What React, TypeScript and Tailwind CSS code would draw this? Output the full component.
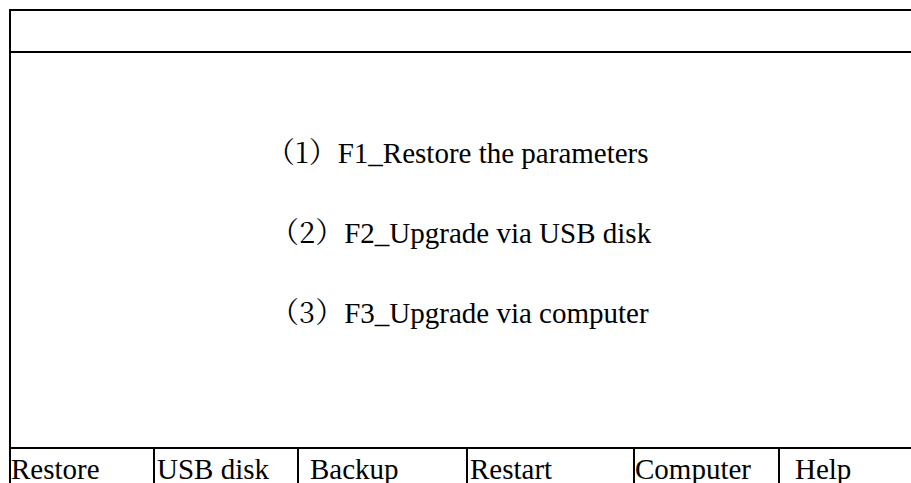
import React from "react";

const OPTIONS = [
  { num: "1", text: "F1_Restore the parameters", pad: "pl-[255px]" },
  { num: "2", text: "F2_Upgrade via USB disk", pad: "pl-[259px]" },
  { num: "3", text: "F3_Upgrade via computer", pad: "pl-[259px]" },
];

const KEYS = [
  { label: "Restore", cls: "w-[144px] pl-0" },
  { label: "USB disk", cls: "w-[144px] pl-[2px]" },
  { label: "Backup", cls: "w-[169px] pl-[11px]" },
  { label: "Restart", cls: "w-[167px] pl-[2px]" },
  { label: "Computer", cls: "w-[145px] pl-0" },
  { label: "Help", cls: "w-[200px] pl-[15px] border-r-0" },
];

const App: React.FC = () => {
  return (
    <div className="w-[911px] h-[483px] overflow-hidden bg-white text-black font-['Liberation_Serif','Times_New_Roman',serif]">
      <div className="ml-[9px] mt-[9px] w-[1000px] border-l-2 border-t-2 border-black">
        <div className="h-[42px] border-b-2 border-black" />
        <div className="h-[396px] border-b-2 border-black pt-[60px] text-[29px] leading-[80px]">
          {OPTIONS.map((o) => (
            <div key={o.num} className={`${o.pad} whitespace-nowrap`}>
              <span className="font-['Noto_Serif_CJK_SC','Noto_Sans_CJK_SC',serif] leading-none">
                （{o.num}）
              </span>
              {o.text}
            </div>
          ))}
        </div>
        <div className="flex h-[40px]">
          {KEYS.map((k) => (
            <div
              key={k.label}
              className={`${k.cls} shrink-0 border-r-2 border-black pt-[6px] text-[29px] leading-none whitespace-nowrap`}
            >
              {k.label}
            </div>
          ))}
        </div>
      </div>
    </div>
  );
};

export default App;
